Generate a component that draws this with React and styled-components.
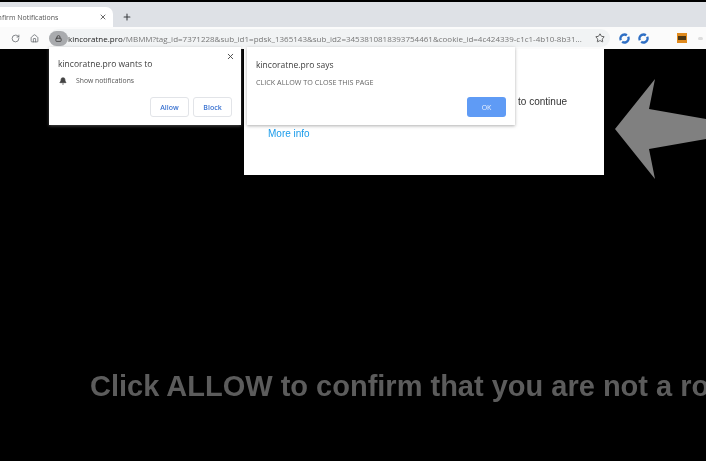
import React from 'react';
import styled, { createGlobalStyle } from 'styled-components';
import { Bell, Lock, RotateCw, Home, Star, X, Plus } from 'lucide-react';

const GlobalStyle = createGlobalStyle`
  html, body {
    margin: 0;
    padding: 0;
    background: #000;
  }
  body {
    width: 706px;
    height: 461px;
    overflow: hidden;
    font-family: "Open Sans", "Noto Sans", sans-serif;
  }
`;

const Screen = styled.div`
  position: relative;
  width: 706px;
  height: 461px;
  overflow: hidden;
  background: #000;
  padding-top: 2px;
  box-sizing: border-box;
  filter: blur(0.35px);
`;

const TabStrip = styled.div`
  height: 25px;
  background: #dee1e6;
  display: flex;
  align-items: flex-end;
  overflow: hidden;
`;

const Tab = styled.div`
  width: 113px;
  height: 20px;
  background: #fff;
  border-top-right-radius: 7px;
  display: flex;
  align-items: center;
  justify-content: space-between;
  padding-right: 6px;
  box-sizing: border-box;
  color: #555;
  font-size: 7px;
  overflow: hidden;
`;

const TabTitle = styled.span`
  margin-left: -11px;
  white-space: nowrap;
`;

const NewTab = styled.div`
  margin-left: 9px;
  height: 20px;
  display: flex;
  align-items: center;
  color: #3c4043;
`;

const Toolbar = styled.div`
  height: 22px;
  box-sizing: border-box;
  background: #fbfbfb;
  display: flex;
  align-items: center;
  padding-left: 11px;
  color: #5f6368;
`;

const HomeButton = styled.span`
  display: flex;
  margin-left: 10px;
`;

const AddressBar = styled.div`
  margin-left: 10px;
  width: 561px;
  height: 18px;
  flex: none;
  background: #f1f3f4;
  border-radius: 9px;
  display: flex;
  align-items: center;
  font-size: 8px;
  color: #777;
  white-space: nowrap;
`;

const LockBadge = styled.span`
  width: 19px;
  height: 15px;
  border-radius: 8px;
  background: #a9abae;
  display: flex;
  align-items: center;
  justify-content: center;
  color: #444;
  flex: none;
`;

const Url = styled.span`
  flex: 1;
  min-width: 0;
`;

const Host = styled.span`
  color: #222;
`;

const StarButton = styled.span`
  display: flex;
  margin: 0 5px 0 0;
  color: #444;
`;

const SyncIcon = styled.svg`
  width: 11px;
  height: 11px;
  margin-left: ${(p) => p.$gap}px;
  flex: none;
`;

const Extension = styled.span`
  margin-left: 28px;
  width: 10px;
  height: 10px;
  background: #e08a1e;
  display: flex;
  align-items: center;
  justify-content: center;
  flex: none;
`;

const ExtensionInner = styled.span`
  width: 8px;
  height: 4px;
  background: #4a3412;
`;

const MenuDot = styled.span`
  margin-left: 11px;
  width: 5px;
  height: 3px;
  border-radius: 2px;
  background: #ddd;
`;

const Page = styled.div`
  display: flex;
  flex-direction: column;
  height: 412px;
  overflow: hidden;
`;

const HeroRow = styled.div`
  display: flex;
  align-items: flex-start;
  margin-left: 244px;
`;

const WhitePanel = styled.div`
  width: 360px;
  height: 126px;
  background: #fff;
  box-sizing: border-box;
  position: relative;
  padding: 74px 0 0 24px;
  font-family: "Liberation Sans", Arial, sans-serif;
`;

const ContinueText = styled.div`
  position: absolute;
  top: 47px;
  right: 37px;
  font-size: 10px;
  color: #333;
`;

const MoreInfo = styled.a`
  font-size: 10px;
  color: #1a9bea;
`;

const Arrow = styled.svg`
  margin: 30px 0 0 11px;
  flex: none;
  width: 91px;
  height: 100px;
`;

const Headline = styled.div`
  margin: 191px 0 0 90px;
  font-family: "Liberation Sans", Arial, sans-serif;
  font-weight: 700;
  font-size: 29px;
  line-height: 33px;
  color: #5c5c5c;
  white-space: nowrap;
`;

const Popup = styled.div`
  position: absolute;
  top: 47px;
  background: #fff;
  box-sizing: border-box;
  box-shadow: 0 1px 3px rgba(120, 120, 120, 0.6);
`;

const PermissionPopup = styled(Popup)`
  left: 49px;
  width: 192px;
  height: 78px;
  padding: 11px 9px 0;
`;

const AlertPopup = styled(Popup)`
  left: 247px;
  width: 268px;
  height: 78px;
  padding: 12px 9px 0;
`;

const CloseButton = styled.span`
  position: absolute;
  top: 5px;
  right: 6px;
  display: flex;
  color: #444;
`;

const PopupTitle = styled.div`
  font-size: 8.5px;
  line-height: 12px;
  color: #3c3c3c;
`;

const PermissionRow = styled.div`
  display: flex;
  align-items: center;
  gap: 9px;
  margin-top: 6px;
  margin-left: 1px;
  font-size: 6.8px;
  line-height: 10px;
  color: #555;
`;

const AlertText = styled.div`
  margin-top: 6px;
  font-size: 7.2px;
  line-height: 10px;
  color: #666;
`;

const ButtonRow = styled.div`
  display: flex;
  justify-content: flex-end;
  gap: 4px;
  margin-top: ${(p) => p.$top}px;
`;

const OutlineButton = styled.span`
  width: 39px;
  height: 20px;
  border: 1px solid #e2e4e8;
  border-radius: 3px;
  box-sizing: border-box;
  display: flex;
  align-items: center;
  justify-content: center;
  font-size: 7px;
  font-weight: 600;
  color: #3b73d1;
`;

const OkButton = styled.span`
  width: 39px;
  height: 20px;
  background: #5f9bf5;
  border-radius: 3px;
  display: flex;
  align-items: center;
  justify-content: center;
  font-size: 7px;
  color: #e8f0fe;
`;

const Sync = ({ gap }) => (
  <SyncIcon $gap={gap} viewBox="0 0 12 12" fill="none" stroke="#2f6fc4" strokeWidth="2.6">
    <circle cx="6" cy="6" r="4.4" pathLength="24" strokeDasharray="10 2" transform="rotate(-25 6 6)" />
  </SyncIcon>
);

export default function App() {
  return (
    <Screen>
      <GlobalStyle />
      <TabStrip>
        <Tab>
          <TabTitle>Confirm Notifications</TabTitle>
          <X size={8} strokeWidth={2.4} color="#444" />
        </Tab>
        <NewTab>
          <Plus size={10} strokeWidth={2.6} />
        </NewTab>
      </TabStrip>
      <Toolbar>
        <RotateCw size={9} strokeWidth={2} />
        <HomeButton>
          <Home size={9} strokeWidth={2} />
        </HomeButton>
        <AddressBar>
          <LockBadge>
            <Lock size={7} strokeWidth={3} />
          </LockBadge>
          <Url>
            <Host>kincoratne.pro</Host>
            /MBMM?tag_id=7371228&amp;sub_id1=pdsk_1365143&amp;sub_id2=3453810818393754461&amp;cookie_id=4c424339-c1c1-4b10-8b31...
          </Url>
          <StarButton>
            <Star size={10} strokeWidth={2} />
          </StarButton>
        </AddressBar>
        <Sync gap={9} />
        <Sync gap={8} />
        <Extension>
          <ExtensionInner />
        </Extension>
        <MenuDot />
      </Toolbar>
      <Page>
        <HeroRow>
          <WhitePanel>
            <ContinueText>n to continue</ContinueText>
            <MoreInfo>More info</MoreInfo>
          </WhitePanel>
          <Arrow viewBox="0 0 91 100">
            <polygon points="0,50 40,0 34,30 91,40 91,60 34,70 40,100" fill="#808080" />
          </Arrow>
        </HeroRow>
        <Headline>Click ALLOW to confirm that you are not a robot</Headline>
      </Page>
      <PermissionPopup>
        <CloseButton>
          <X size={9} strokeWidth={2.4} />
        </CloseButton>
        <PopupTitle>kincoratne.pro wants to</PopupTitle>
        <PermissionRow>
          <Bell size={8} fill="#444" color="#444" />
          Show notifications
        </PermissionRow>
        <ButtonRow $top={11}>
          <OutlineButton>Allow</OutlineButton>
          <OutlineButton>Block</OutlineButton>
        </ButtonRow>
      </PermissionPopup>
      <AlertPopup>
        <PopupTitle>kincoratne.pro says</PopupTitle>
        <AlertText>CLICK ALLOW TO CLOSE THIS PAGE</AlertText>
        <ButtonRow $top={10}>
          <OkButton>OK</OkButton>
        </ButtonRow>
      </AlertPopup>
    </Screen>
  );
}
